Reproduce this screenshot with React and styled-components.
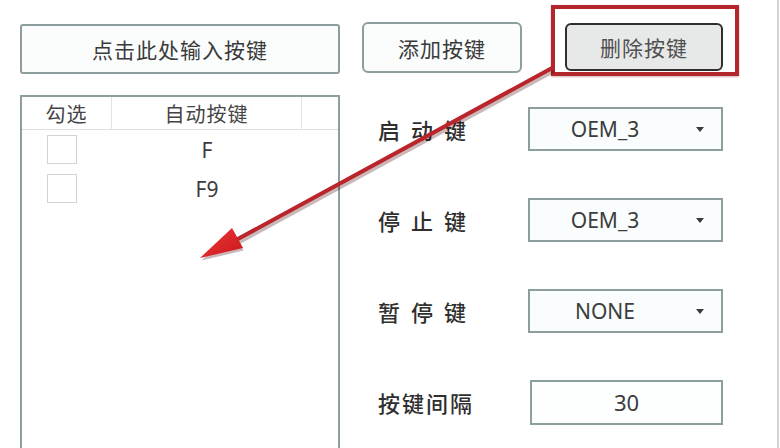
import React from "react";
import styled, { createGlobalStyle } from "styled-components";

const Global = createGlobalStyle`
  html, body { margin: 0; padding: 0; background: #ffffff; }
  body { font-family: "Noto Sans CJK SC", "Noto Sans", sans-serif; color: #333; }
  * { box-sizing: border-box; }
`;

const Page = styled.div`
  position: relative;
  width: 779px;
  height: 448px;
  overflow: hidden;
  padding: 22px 0 0 20px;
  border-right: 2px solid #d2d6d6;
  background: #fff;
`;

const TopBar = styled.div`
  display: flex;
  align-items: flex-start;
  height: 52px;
`;

const BaseButton = styled.div`
  display: flex;
  align-items: center;
  justify-content: center;
  font-size: 21px;
  letter-spacing: 1px;
  color: #3a3a3a;
  background: #fbfdfd;
  border: 2px solid #8d9e9f;
`;

const InputButton = styled(BaseButton)`
  width: 320px;
  height: 50px;
  margin-top: 2px;
  border-radius: 3px;
`;

const AddButton = styled(BaseButton)`
  width: 160px;
  height: 51px;
  margin-left: 22px;
  border-radius: 6px;
`;

const DeleteWrap = styled.div`
  position: relative;
  margin-left: 43px;
  margin-top: 1px;
`;

const DeleteButton = styled(BaseButton)`
  width: 158px;
  height: 48px;
  border-radius: 6px;
  border-color: #2e2e2e;
  background: #e7e8e8;
  color: #505050;
`;

const Highlight = styled.div`
  position: absolute;
  top: -18px;
  left: -14px;
  right: -16px;
  bottom: -5px;
  border: 4px solid #b2262c;
  box-shadow: 0 1px 2px rgba(120, 0, 0, 0.3);
  pointer-events: none;
`;

const Body = styled.div`
  display: flex;
  margin-top: 21px;
`;

const ListPanel = styled.div`
  width: 320px;
  height: 380px;
  border: 2px solid #8d9e9f;
  background: #fff;
`;

const ListGrid = styled.div`
  display: grid;
  grid-template-columns: 90px 190px 1fr;
`;

const HeaderCell = styled.div`
  height: 33px;
  display: flex;
  align-items: center;
  justify-content: center;
  font-size: 20px;
  letter-spacing: 1px;
  color: #444;
  border-bottom: 1px solid #dcdfe0;
  border-right: ${(p) => (p.$divider ? "1px solid #e2e4e4" : "none")};
`;

const Cell = styled.div`
  height: 39px;
  display: flex;
  align-items: center;
  justify-content: ${(p) => (p.$left ? "flex-start" : "center")};
  padding-left: ${(p) => (p.$left ? "25px" : "0")};
  font-family: "Noto Sans", "Noto Sans CJK SC", sans-serif;
  font-size: 21px;
  color: #3c3c3c;
`;

const Check = styled.span`
  width: 30px;
  height: 29px;
  border: 1px solid #d2d4d4;
  background: #fff;
`;

const Form = styled.div`
  display: flex;
  flex-direction: column;
  gap: 47px;
  padding: 12px 0 0 38px;
`;

const Row = styled.div`
  display: flex;
  align-items: center;
  height: 44px;
`;

const Label = styled.div`
  width: ${(p) => p.$w}px;
  font-size: 22px;
  letter-spacing: ${(p) => p.$ls}px;
  white-space: pre;
  color: #2f2f2f;
  font-weight: 500;
`;

const Select = styled.div`
  width: 195px;
  height: 44px;
  display: grid;
  grid-template-columns: 1fr 41px;
  align-items: center;
  border: 2px solid #8d9e9f;
  background: #f9fdfd;
  font-family: "Noto Sans", "Noto Sans CJK SC", sans-serif;
  font-size: 21px;
  color: #3c3c3c;
`;

const SelectText = styled.span`
  text-align: center;
`;

const Caret = styled.span`
  justify-self: start;
  margin-left: 16px;
  width: 0;
  height: 0;
  border-left: 4px solid transparent;
  border-right: 4px solid transparent;
  border-top: 5px solid #3a3a3a;
`;

const TextBox = styled.div`
  width: 193px;
  height: 45px;
  display: flex;
  align-items: center;
  justify-content: center;
  border: 2px solid #8d9e9f;
  background: #fdfefe;
  font-family: "Noto Sans", "Noto Sans CJK SC", sans-serif;
  font-size: 22px;
  color: #3c3c3c;
`;

const ArrowLayer = styled.svg`
  position: absolute;
  left: 0;
  top: 0;
  width: 780px;
  height: 448px;
  pointer-events: none;
`;

function Arrow() {
  return (
    <ArrowLayer viewBox="0 0 780 448">
      <defs>
        <linearGradient id="head" x1="0" y1="0" x2="1" y2="1">
          <stop offset="0" stopColor="#f03a3a" />
          <stop offset="1" stopColor="#c8161b" />
        </linearGradient>
      </defs>
      <g transform="translate(1.5,2.5)" opacity="0.28">
        <line x1="552" y1="68" x2="236" y2="240" stroke="#400" strokeWidth="5" />
        <polygon points="200,258 242,248 232,228" fill="#400" />
      </g>
      <line x1="552" y1="68" x2="236" y2="240" stroke="#b9252b" strokeWidth="4" strokeLinecap="round" />
      <polygon points="200,258 243,248 232,228" fill="url(#head)" />
    </ArrowLayer>
  );
}

const rows = ["F", "F9"];

export default function App() {
  return (
    <>
      <Global />
      <Page>
        <TopBar>
          <InputButton>点击此处输入按键</InputButton>
          <AddButton>添加按键</AddButton>
          <DeleteWrap>
            <DeleteButton>删除按键</DeleteButton>
            <Highlight />
          </DeleteWrap>
        </TopBar>
        <Body>
          <ListPanel>
            <ListGrid>
              <HeaderCell $divider>勾选</HeaderCell>
              <HeaderCell $divider>自动按键</HeaderCell>
              <HeaderCell />
              {rows.map((r) => (
                <React.Fragment key={r}>
                  <Cell $left>
                    <Check />
                  </Cell>
                  <Cell>{r}</Cell>
                  <Cell />
                </React.Fragment>
              ))}
            </ListGrid>
          </ListPanel>
          <Form>
            <Row>
              <Label $w={150} $ls={3}>启 动 键</Label>
              <Select>
                <SelectText>OEM_3</SelectText>
                <Caret />
              </Select>
            </Row>
            <Row>
              <Label $w={150} $ls={3}>停 止 键</Label>
              <Select>
                <SelectText>OEM_3</SelectText>
                <Caret />
              </Select>
            </Row>
            <Row>
              <Label $w={150} $ls={3}>暂 停 键</Label>
              <Select>
                <SelectText>NONE</SelectText>
                <Caret />
              </Select>
            </Row>
            <Row>
              <Label $w={152} $ls={2}>按键间隔</Label>
              <TextBox>30</TextBox>
            </Row>
          </Form>
        </Body>
        <Arrow />
      </Page>
    </>
  );
}
